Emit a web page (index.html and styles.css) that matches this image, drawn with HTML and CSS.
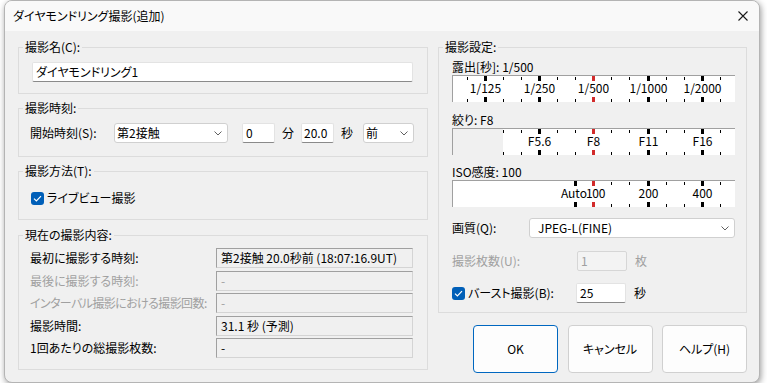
FILE: index.html
```html
<!DOCTYPE html>
<html lang="ja">
<head>
    <meta charset="UTF-8">
    <title>ダイヤモンドリング撮影(追加)</title>
    <link rel="stylesheet" href="styles.css">
</head>
<body>
    <div class="window">
        <div class="titlebar">
            <span class="title">ダイヤモンドリング撮影(追加)</span>
            <svg class="close" width="10" height="10" viewBox="0 0 10 10"><path d="M0.5 0.5 L9.5 9.5 M9.5 0.5 L0.5 9.5" stroke="#1a1a1a" stroke-width="1.1" fill="none"/></svg>
        </div>

        <div class="client">
            <div class="col-left">
                <fieldset class="group">
                    <legend>撮影名(C):</legend>
                    <div class="body body-name">
                        <div class="edit">ダイヤモンドリング1</div>
                    </div>
                </fieldset>

                <fieldset class="group">
                    <legend>撮影時刻:</legend>
                    <div class="body body-time">
                        <span class="start-label">開始時刻(S):</span>
                        <div class="combo combo-contact">第2接触<svg class="chev" width="8" height="5" viewBox="0 0 8 5"><path d="M0.5 0.5 L4 4 L7.5 0.5" stroke="#606060" fill="none"/></svg></div>
                        <div class="edit edit-min">0</div>
                        <span class="unit">分</span>
                        <div class="edit edit-sec">20.0</div>
                        <span class="unit">秒</span>
                        <div class="combo combo-side">前<svg class="chev" width="8" height="5" viewBox="0 0 8 5"><path d="M0.5 0.5 L4 4 L7.5 0.5" stroke="#606060" fill="none"/></svg></div>
                    </div>
                </fieldset>

                <fieldset class="group">
                    <legend>撮影方法(T):</legend>
                    <div class="body body-method">
                        <span class="check"><svg width="9" height="7" viewBox="0 0 9 7"><path d="M1 3.6 L3.4 6 L8 1.2" stroke="#fff" stroke-width="1.2" fill="none"/></svg></span>
                        <span>ライブビュー撮影</span>
                    </div>
                </fieldset>

                <fieldset class="group group-now">
                    <legend>現在の撮影内容:</legend>
                    <div class="body body-now">
                        <span>最初に撮影する時刻:</span>
                        <div class="readout">第2接触 20.0秒前 (18:07:16.9UT)</div>
                        <span class="dim">最後に撮影する時刻:</span>
                        <div class="readout dim">-</div>
                        <span class="dim tight">インターバル撮影における撮影回数:</span>
                        <div class="readout dim">-</div>
                        <span>撮影時間:</span>
                        <div class="readout">31.1 秒 (予測)</div>
                        <span>1回あたりの総撮影枚数:</span>
                        <div class="readout">-</div>
                    </div>
                </fieldset>
            </div>

            <div class="col-right">
                <fieldset class="group">
                    <legend>撮影設定:</legend>
                    <div class="body body-settings">
                        <div class="caption">露出[秒]: 1/500</div>
                        <div class="scale">
                            <span class="tick" style="left:15px"></span>
                            <span class="tick major" style="left:33px"><i>1/125</i></span>
                            <span class="tick" style="left:51px"></span>
                            <span class="tick" style="left:69px"></span>
                            <span class="tick major" style="left:87px"><i>1/250</i></span>
                            <span class="tick" style="left:105px"></span>
                            <span class="tick" style="left:123px"></span>
                            <span class="tick major current" style="left:141px"><i>1/500</i></span>
                            <span class="tick" style="left:159px"></span>
                            <span class="tick" style="left:177px"></span>
                            <span class="tick major" style="left:196px"><i>1/1000</i></span>
                            <span class="tick" style="left:214px"></span>
                            <span class="tick" style="left:232px"></span>
                            <span class="tick major" style="left:250px"><i>1/2000</i></span>
                            <span class="tick" style="left:268px"></span>
                        </div>

                        <div class="caption cap-gap">絞り: F8</div>
                        <div class="scale scale-aperture">
                            <span class="tick" style="left:51px"></span>
                            <span class="tick" style="left:69px"></span>
                            <span class="tick major" style="left:87px"><i>F5.6</i></span>
                            <span class="tick" style="left:105px"></span>
                            <span class="tick" style="left:123px"></span>
                            <span class="tick major current" style="left:141px"><i>F8</i></span>
                            <span class="tick" style="left:159px"></span>
                            <span class="tick" style="left:177px"></span>
                            <span class="tick major" style="left:196px"><i>F11</i></span>
                            <span class="tick" style="left:214px"></span>
                            <span class="tick" style="left:232px"></span>
                            <span class="tick major" style="left:250px"><i>F16</i></span>
                            <span class="tick" style="left:268px"></span>
                        </div>

                        <div class="caption cap-gap2">ISO感度: 100</div>
                        <div class="scale">
                            <span class="tick major" style="left:123px"><i class="lbl-end">Auto</i></span>
                            <span class="tick major current" style="left:141px"><i class="lbl-start">100</i></span>
                            <span class="tick" style="left:159px"></span>
                            <span class="tick" style="left:177px"></span>
                            <span class="tick major" style="left:196px"><i>200</i></span>
                            <span class="tick" style="left:214px"></span>
                            <span class="tick" style="left:232px"></span>
                            <span class="tick major" style="left:250px"><i>400</i></span>
                            <span class="tick" style="left:268px"></span>
                        </div>

                        <div class="row row-quality">
                            <span>画質(Q):</span>
                            <div class="combo combo-quality">JPEG-L(FINE)<svg class="chev" width="8" height="5" viewBox="0 0 8 5"><path d="M0.5 0.5 L4 4 L7.5 0.5" stroke="#606060" fill="none"/></svg></div>
                        </div>

                        <div class="row row-count dim">
                            <span>撮影枚数(U):</span>
                            <div class="edit edit-small disabled">1</div>
                            <span class="unit">枚</span>
                        </div>

                        <div class="row row-burst">
                            <span class="burst-label"><span class="check"><svg width="9" height="7" viewBox="0 0 9 7"><path d="M1 3.6 L3.4 6 L8 1.2" stroke="#fff" stroke-width="1.2" fill="none"/></svg></span>バースト撮影(B):</span>
                            <div class="edit edit-small">25</div>
                            <span class="unit">秒</span>
                        </div>
                    </div>
                </fieldset>

                <div class="buttons">
                    <button class="default">OK</button>
                    <button>キャンセル</button>
                    <button>ヘルプ(H)</button>
                </div>
            </div>
        </div>
    </div>
</body>
</html>
```

FILE: styles.css
```css
* { box-sizing: border-box; }
body {
    margin: 0;
    background: #fff;
    font-family: "Noto Sans CJK JP", "Noto Sans", sans-serif;
    font-size: 12px;
    line-height: 14px;
    color: #000;
    font-feature-settings: "palt" 1;
}
.window {
    margin-left: 4px;
    width: 756px;
    height: 383px;
    background: #f0f0f0;
    border: 1px solid #b4b4b4;
    border-radius: 8px;
    box-shadow: 1px 2px 6px rgba(0, 0, 0, 0.4);
    overflow: hidden;
}
.titlebar {
    height: 30px;
    background: #f9f9f9;
    display: flex;
    align-items: center;
    justify-content: space-between;
    padding: 0 11px 0 8px;
}
.close { display: block; }
.client {
    display: flex;
    gap: 10px;
    padding: 9px 12px 0 13px;
}
.col-left {
    width: 410px;
    display: flex;
    flex-direction: column;
    gap: 7px;
}
.col-right { width: 309px; }

/* group boxes */
.group {
    margin: 0;
    padding: 0;
    border: 1px solid #dcdcdc;
    min-width: 0;
}
.group legend {
    margin-left: 4px;
    padding: 0 2px;
    line-height: 14px;
}
.group-now { margin-top: 1px; }
.body-name { padding: 8px 14px 11px 13px; }
.body-time {
    display: flex;
    align-items: center;
    padding: 8px 0 13px 11px;
}
.body-method {
    display: flex;
    align-items: center;
    height: 41px;
    padding: 10px 0 11px 12px;
}
.body-now {
    display: grid;
    grid-template-columns: 186px 197px;
    grid-auto-rows: 20px;
    row-gap: 2.5px;
    align-items: center;
    padding: 6px 14px 11px 11px;
}
.body-settings { padding: 6px 11px 9px 13px; }

/* controls */
.edit {
    height: 20px;
    background: #fff;
    border: 1px solid #e3e3e3;
    border-bottom-color: #8a8a8a;
    border-radius: 2px;
    padding: 0 3px;
    display: flex;
    align-items: center;
}
.edit.disabled {
    background: #f3f3f3;
    border-color: #d6d6d6;
    color: #a0a0a0;
}
.combo {
    height: 20px;
    background: #fff;
    border: 1px solid #d0d0d0;
    border-radius: 3px;
    padding: 0 5px 0 2px;
    display: flex;
    align-items: center;
    justify-content: space-between;
}
.chev { display: block; }
.start-label { width: 84px; }
.combo-contact { width: 114px; }
.edit-min { width: 33px; margin-left: 14px; }
.unit { margin: 0 7px; }
.edit-sec { width: 33px; padding-left: 2px; }
.combo-side { width: 51px; margin-left: 3px; }
.check {
    width: 13px;
    height: 13px;
    border-radius: 3px;
    background: #005fb8;
    display: inline-flex;
    align-items: center;
    justify-content: center;
    margin-right: 3px;
    flex: none;
}
.readout {
    height: 20px;
    border: 1px solid #d4d4d4;
    border-top-color: #a0a0a0;
    border-left-color: #a0a0a0;
    padding: 0 4px;
    display: flex;
    align-items: center;
    white-space: nowrap;
}
.dim { color: #a0a0a0; }
.body-now span { white-space: nowrap; }
.tight { letter-spacing: -0.6px; }

/* scales */
.caption { height: 14px; }
.cap-gap { margin-top: 11px; }
.cap-gap2 { margin-top: 10px; }
.scale {
    position: relative;
    height: 27px;
    margin-top: 1px;
    background: #fff;
    border-top: 1px solid #a0a0a0;
    border-left: 1px solid #a0a0a0;
}
.scale-aperture {
    background: linear-gradient(to right, #f0f0f0 50px, #fff 50px);
}
.tick {
    position: absolute;
    top: 0;
    bottom: 0;
    width: 1px;
    margin-left: -1px;
}
.tick::before, .tick::after {
    content: "";
    position: absolute;
    left: 0;
    width: 100%;
    height: 3px;
    background: #000;
}
.tick::before { top: 1px; }
.tick::after { bottom: 0; }
.tick.major { width: 3px; margin-left: -2px; }
.tick.major::before { top: 0; height: 5px; }
.tick.major::after { height: 5px; }
.tick.current::before, .tick.current::after { background: #d22b2b; }
.tick i {
    position: absolute;
    left: 1.5px;
    top: 5px;
    transform: translateX(-50%);
    font-style: normal;
    white-space: nowrap;
    line-height: 14px;
}
.tick i.lbl-end { left: auto; right: -10px; transform: none; }
.tick i.lbl-start { left: -6px; transform: none; letter-spacing: -0.3px; }

/* settings rows */
.row {
    display: flex;
    align-items: center;
    height: 20px;
}
.row-quality { margin-top: 11px; justify-content: space-between; }
.combo-quality { width: 206px; padding-left: 8px; }
.row-count { margin-top: 13px; }
.row-burst { margin-top: 12px; }
.row-count > span:first-child, .burst-label {
    width: 125px;
    display: flex;
    align-items: center;
}
.burst-label { width: 124px; }
.edit-small { width: 50px; }
.row .unit { margin: 0 0 0 8px; }

/* buttons */
.buttons {
    display: flex;
    justify-content: flex-end;
    gap: 9.5px;
    margin-top: 12px;
}
button {
    width: 85px;
    height: 48px;
    font: inherit;
    font-feature-settings: "palt" 1;
    background: #fdfdfd;
    border: 1px solid #d0d0d0;
    border-radius: 4px;
    color: #000;
}
button.default { border-color: #0067c0; }
```
